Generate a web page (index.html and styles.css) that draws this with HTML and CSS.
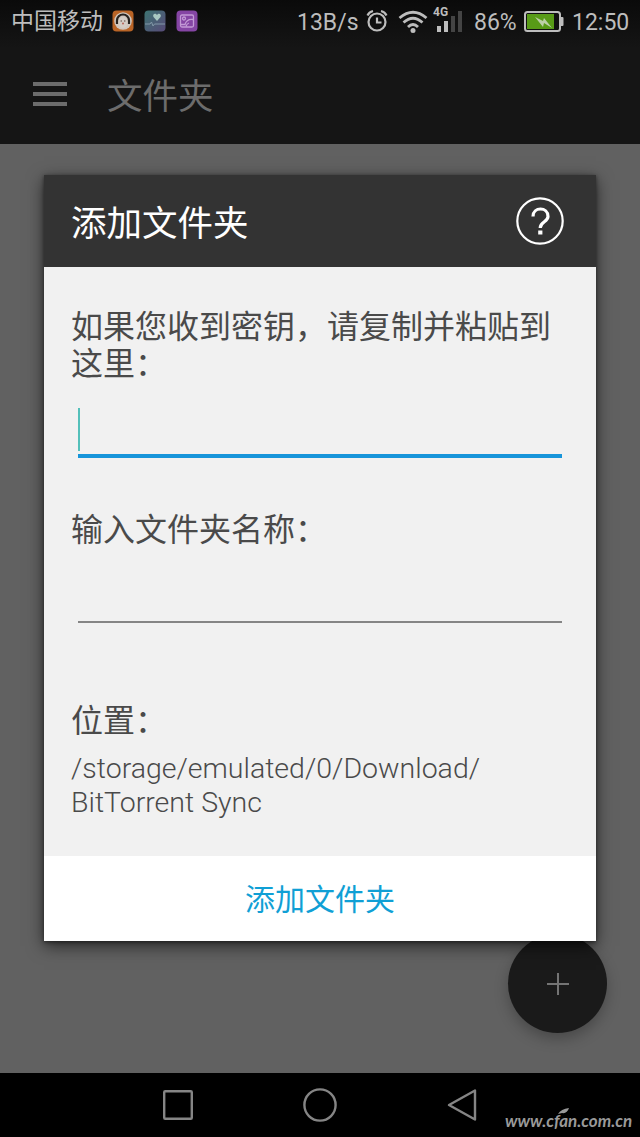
FILE: index.html
```html
<!DOCTYPE html>
<html lang="zh-CN">
<head>
<meta charset="utf-8">
<title>添加文件夹</title>
<link rel="stylesheet" href="styles.css">
</head>
<body>
<div class="screen">
  <header class="status">
    <span class="carrier">中国移动</span>
    <svg class="app-icon" width="22" height="22" viewBox="0 0 22 22"><rect x=".5" y=".5" width="21" height="21" rx="4" fill="#b96426"/><circle cx="11" cy="11" r="8.800" fill="#d0c6bd"/><path d="M5 14V10.500a6 6 0 0 1 12 0V14" fill="none" stroke="#27231f" stroke-width="2.200"/><ellipse cx="11" cy="12.500" rx="4.500" ry="5.500" fill="#d5cdc5"/><circle cx="9.200" cy="11" r=".7" fill="#5b4a42"/><circle cx="12.800" cy="11" r=".7" fill="#5b4a42"/><circle cx="11" cy="13.500" r="1" fill="#b56458"/></svg>
    <svg class="app-icon" width="22" height="22" viewBox="0 0 22 22"><defs><linearGradient id="health" x1="0" y1="0" x2="1" y2="1"><stop offset="0" stop-color="#3d7472"/><stop offset="1" stop-color="#584a78"/></linearGradient></defs><rect x=".5" y=".5" width="21" height="21" rx="4" fill="url(#health)"/><path d="M13 11 9.500 7c-1.500-3 2-4.500 3.500-2 1.500-2.500 5-1 3.500 2z" fill="#a9c9c2"/><path d="M1 14h5l1.500-2 1.500 4 1.500-2H21" fill="none" stroke="#8298a8"/></svg>
    <svg class="app-icon" width="22" height="22" viewBox="0 0 22 22"><rect x=".5" y=".5" width="21" height="21" rx="4" fill="#8545a4"/><g fill="none" stroke="#c39ad6" stroke-width="1.300"><rect x="4.500" y="5" width="13" height="12" rx="1.500"/><circle cx="8" cy="8.500" r="1.500"/><path d="M5 14.500h4c1-3.500 4-5.500 8-5M10 16.500c.5-2 1.500-3 3-3.500"/></g></svg>
    <span class="speed">13B/s</span>
    <svg class="alarm" width="22" height="24" viewBox="0 0 22 24" fill="none" stroke="#bdbdbd" stroke-width="2.200"><circle cx="11" cy="13" r="8.500"/><path d="M1.500 6.500Q3 3 7 2M20.500 6.500Q19 3 15 2M11 8.500V13.500h4.500"/></svg>
    <svg class="wifi" width="30" height="24" viewBox="0 0 30 24" fill="none" stroke="#bdbdbd" stroke-width="2.800"><path d="M1.500 8Q15-3.500 28.500 8M5.500 12.500Q15 4 24.500 12.500M10 17Q15 12 20 17"/><circle cx="15" cy="20.500" r="2.500" fill="#bdbdbd" stroke="none"/></svg>
    <span class="signal"><b class="net">4G</b><i class="bar b1"></i><i class="bar b2"></i><i class="bar b3"></i><i class="bar b4"></i></span>
    <span class="percent">86%</span>
    <svg class="battery" width="40" height="22" viewBox="0 0 40 22"><rect x="1" y="1" width="35" height="19" rx="2.500" fill="#111" stroke="#bdbdbd" stroke-width="2"/><path d="M37 6h1.500q1 0 1 1v7q0 1-1 1H37" fill="#bdbdbd"/><rect x="3" y="3" width="27" height="15" fill="#589b17"/><path d="M11 6l8 4 1-3 8 10-8-5-1 4z" fill="#bcd0a8"/></svg>
    <span class="clock">12:50</span>
  </header>
  <div class="toolbar">
    <div class="menu"><i></i><i></i><i></i></div>
    <span class="page-title">文件夹</span>
  </div>
  <main class="content">
    <div class="fab"><svg width="22" height="22" viewBox="0 0 22 22"><path d="M11 0v22M0 11h22" stroke="#747474" stroke-width="2"/></svg></div>
    <section class="dialog">
      <div class="dialog-head">
        <h1>添加文件夹</h1>
        <svg class="help" width="48" height="48" viewBox="0 0 48 48"><circle cx="24" cy="24" r="22.700" fill="none" stroke="#fff" stroke-width="2.200"/><path d="M17 19.500c0-10 15-10 15 0 0 5.500-7.800 5-7.800 11.500" fill="none" stroke="#fff" stroke-width="3.200"/><rect x="22.200" y="33.500" width="4.200" height="4" fill="#fff"/></svg>
      </div>
      <div class="dialog-body">
        <p class="label">如果您收到密钥，请复制并粘贴到这里：</p>
        <div class="field focused"><i class="caret"></i></div>
        <p class="label name-label">输入文件夹名称：</p>
        <div class="field"></div>
        <p class="label place-label">位置：</p>
        <p class="path">/storage/emulated/0/Download/<br>BitTorrent Sync</p>
      </div>
      <div class="dialog-foot">添加文件夹</div>
    </section>
  </main>
  <nav class="nav">
    <svg class="nav-icons" width="640" height="64" viewBox="0 0 640 64" fill="none" stroke="#858585" stroke-width="2.400" stroke-linejoin="round"><rect x="164.200" y="18.200" width="27.600" height="27.600" rx="1"/><circle cx="320" cy="32" r="15.600"/><path d="M449 32 475 17.500v29z"/></svg>
    <span class="watermark">www.cfan.com.cn<svg class="leaf" width="12" height="7" viewBox="0 0 12 7"><path d="M0 6Q3 1 11 0 9 6 4 5z" fill="#999"/></svg></span>
  </nav>
</div>
</body>
</html>
```
FILE: styles.css
```css
* { box-sizing: border-box; }
body { margin: 0; font-family: Roboto, "Noto Sans CJK SC", sans-serif; }
h1, p { margin: 0; font-weight: 400; }
svg { display: block; flex: none; }
.screen { width: 640px; height: 1137px; display: flex; flex-direction: column; overflow: hidden; }

.status { height: 48px; flex: none; display: flex; align-items: flex-start; background: linear-gradient(#0a0a0a, #151515); color: #bdbdbd; font-size: 23px; line-height: 28px; padding: 8px 0 0 11px; white-space: nowrap; }
.carrier { width: 101px; }
.app-icon { margin: 2px 10px 0 0; }
.speed { margin: 1px 0 0 89px; width: 69px; }
.alarm { margin-top: 1px; }
.wifi { margin: 2px 0 0 10px; }
.signal { position: relative; display: flex; align-items: flex-end; gap: 3px; width: 28px; height: 24px; margin-left: 9px; }
.net { position: absolute; left: -4px; top: -5px; font-size: 12px; line-height: 18px; }
.bar { width: 4px; background: #bdbdbd; }
.b1 { height: 6px; }
.b2 { height: 11px; }
.b3 { height: 16px; background: #444; }
.b4 { height: 21px; background: #444; }
.percent { margin: 1px 0 0 9px; width: 50px; }
.battery { margin: 3px 0 0; }
.clock { margin: 1px 0 0 8px; }

.toolbar { height: 96px; flex: none; display: flex; align-items: center; background: #151515; padding-left: 33px; }
.menu { width: 34px; display: flex; flex-direction: column; gap: 6px; margin-top: -5px; }
.menu i { height: 4px; background: #6c6c6c; }
.page-title { margin: 1px 0 0 40px; font-size: 35.500px; line-height: 40px; color: #6c6c6c; }

.content { position: relative; height: 929px; flex: none; background: #616161; padding: 31px 44px 0; }
.fab { position: absolute; left: 508px; top: 790px; width: 99px; height: 99px; border-radius: 50%; background: #1a1a1a; display: flex; align-items: center; justify-content: center; box-shadow: 0 6px 14px rgba(0, 0, 0, .25); }
.dialog { position: relative; width: 552px; height: 766px; display: flex; flex-direction: column; background: #f1f1f1; box-shadow: 0 5px 16px rgba(0, 0, 0, .6), 0 1px 4px rgba(0, 0, 0, .5); }
.dialog-head { height: 92px; flex: none; display: flex; align-items: center; justify-content: space-between; background: #333; padding: 0 32px 0 27px; color: #fff; }
.dialog-head h1 { margin-top: 5px; font-size: 35.500px; line-height: 40px; }
.dialog-body { flex: 1; padding: 42px 27px 0; color: #4a4a4a; }
.label { font-size: 32px; line-height: 37px; }
.field { margin: 22px 7px 0; height: 52px; border-bottom: 2px solid #858585; }
.focused { height: 54px; margin-top: 21px; border-bottom: 4px solid #1795da; padding-top: 4px; }
.caret { display: block; width: 2px; height: 43px; background: #54c0ba; }
.name-label { margin-top: 54px; }
.place-label { margin-top: 80px; }
.path { margin-top: 12px; font-size: 28.500px; font-weight: 300; line-height: 34px; white-space: nowrap; }
.dialog-foot { height: 85px; flex: none; background: #fff; color: #109fd5; font-size: 30px; line-height: 88px; text-align: center; }

.nav { position: relative; height: 64px; flex: none; background: #000; }
.watermark { position: absolute; left: 505px; top: 36px; color: #999; font: italic 700 17px/24px Lato, sans-serif; white-space: nowrap; }
.leaf { position: absolute; left: 53px; top: -1px; }
```
